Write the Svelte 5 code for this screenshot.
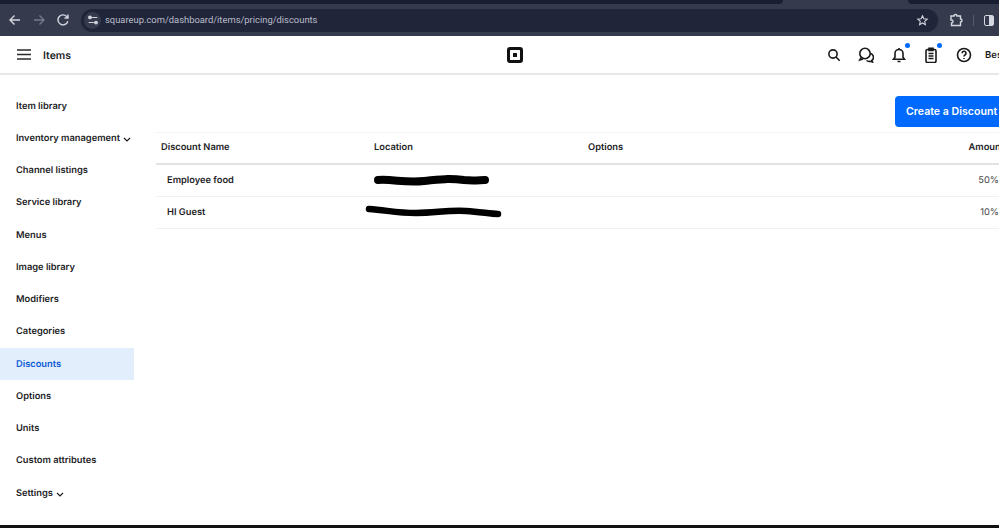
<script lang="ts">
  const navItems = [
    { label: 'Item library' },
    { label: 'Inventory management', caret: true },
    { label: 'Channel listings' },
    { label: 'Service library' },
    { label: 'Menus' },
    { label: 'Image library' },
    { label: 'Modifiers' },
    { label: 'Categories' },
    { label: 'Discounts', active: true },
    { label: 'Options' },
    { label: 'Units' },
    { label: 'Custom attributes' },
    { label: 'Settings', caret: true },
  ];

  const discounts = [
    {
      name: 'Employee food',
      amount: '50%',
      scribbleWidth: 115,
      scribbleShift: 0,
      thickness: 8,
      scribble: 'M4 5 C20 4 30 8 50 6 C70 4 75 3 90 5 C100 6 106 5 111 5',
    },
    {
      name: 'HI Guest',
      amount: '10%',
      scribbleWidth: 135,
      scribbleShift: -8,
      thickness: 6.5,
      scribble: 'M3 2 C20 3 30 6 50 6 C70 6 80 3 100 4 C115 5 125 7 132 7',
    },
  ];
</script>

<div class="window">
  <div class="tabstrip">
    <div class="tab-dark left"></div>
    <div class="tab-dark right"></div>
  </div>

  <div class="toolbar">
    <svg class="tool-icon" viewBox="0 0 16 16"><path d="M13 8H3.500M7.500 3.500 3 8l4.500 4.500" /></svg>
    <svg class="tool-icon dim" viewBox="0 0 16 16"><path d="M3 8h9.500M8.500 3.500 13 8l-4.500 4.500" /></svg>
    <svg class="tool-icon" viewBox="0 0 16 16"><path d="M12.800 9.200A5 5 0 1 1 11.500 4.300L13 5.800M13 2.500v3.500H9.500" /></svg>
    <div class="omnibox">
      <span class="site-chip">
        <svg viewBox="0 0 14 14"><path d="M6 4h6M2 10h6" /><circle cx="3.500" cy="4" r="1.600" /><circle cx="10.500" cy="10" r="1.600" /></svg>
      </span>
      <span class="url">squareup.com/dashboard/items/pricing/discounts</span>
      <svg class="star" viewBox="0 0 16 16"><path d="M8 2.200 9.700 6l4.100.4-3.100 2.700.9 4L8 11l-3.600 2.100.9-4L2.200 6.400 6.300 6z" /></svg>
    </div>
    <svg class="tool-icon puzzle" viewBox="0 0 16 16"><path d="M3 4h3a1.500 1.500 0 0 1 3 0h3.500v3a1.500 1.500 0 0 1 0 3v3.500H3.500V11a1.500 1.500 0 0 0 0-3H3z" /></svg>
    <span class="divider"></span>
    <span class="side-panel"></span>
  </div>

  <header class="topbar">
    <div class="topbar-left">
      <svg class="menu" viewBox="0 0 14 11"><path d="M0 1h14M0 5.500h14M0 10h14" /></svg>
      <span class="title">Items</span>
    </div>

    <svg class="logo" viewBox="0 0 16 16">
      <path fill-rule="evenodd" d="M3 0h10a3 3 0 0 1 3 3v10a3 3 0 0 1-3 3H3a3 3 0 0 1-3-3V3a3 3 0 0 1 3-3zm.500 3a.500.500 0 0 0-.500.500v9a.500.500 0 0 0 .500.500h9a.500.500 0 0 0 .500-.500v-9a.500.500 0 0 0-.500-.500z" />
      <rect x="6" y="6" width="4" height="4" rx=".5" />
    </svg>

    <div class="topbar-right">
      <svg class="top-icon" viewBox="0 0 16 16"><circle cx="7" cy="7" r="4.100" /><path d="m10 10 3.700 3.700" /></svg>
      <svg class="top-icon" viewBox="0 0 16 16"><circle cx="7" cy="6.500" r="5.200" /><path d="M3 10.500 1.800 13l3.200-1M12.800 6.500a4 4 0 0 1 1 7l.7 1.500-2.500-.7a4 4 0 0 1-3.500-.8" /></svg>
      <span class="icon-wrap">
        <svg class="top-icon" viewBox="0 0 16 16"><path d="M2.500 12.200h11l-1.500-2V6.500a4 4 0 0 0-8 0v3.700zM6.500 14.500h3M8 1v1.500" /></svg>
        <span class="badge"></span>
      </span>
      <span class="icon-wrap">
        <svg class="top-icon" viewBox="0 0 16 16"><rect x="3" y="2.500" width="10" height="13" rx="1.500" /><path d="M6 1.200h4v2.300H6zM5.500 6.500h5M5.500 9h5M5.500 11.500h5" /></svg>
        <span class="badge"></span>
      </span>
      <svg class="top-icon" viewBox="0 0 16 16"><circle cx="8" cy="8" r="6.500" /><path d="M6 6.300a2 2 0 1 1 3 1.700c-.7.400-1 .8-1 1.500" /><path d="M8 11v1" /></svg>
      <span class="account">Best</span>
    </div>
  </header>

  <div class="body">
    <nav class="sidebar">
      {#each navItems as item}
        <a class="nav-item" class:active={item.active} href="#top">
          {item.label}
          {#if item.caret}
            <svg class="caret" viewBox="0 0 8 5"><path d="M1 1l3 3 3-3" /></svg>
          {/if}
        </a>
      {/each}
    </nav>

    <main class="content">
      <div class="actions">
        <button class="create">Create a Discount</button>
      </div>

      <div class="table">
        <div class="row head">
          <div>Discount Name</div>
          <div>Location</div>
          <div>Options</div>
          <div class="num">Amount</div>
        </div>
        {#each discounts as d}
          <div class="row">
            <div class="name">{d.name}</div>
            <div class="location">
              <svg
                class="scribble"
                viewBox="0 0 {d.scribbleWidth} 10"
                width={d.scribbleWidth}
                height="10"
                style="margin-left: {d.scribbleShift}px; stroke-width: {d.thickness}"
              >
                <path d={d.scribble} />
              </svg>
            </div>
            <div></div>
            <div class="num amount">{d.amount}</div>
          </div>
        {/each}
      </div>
    </main>
  </div>

  <div class="bottom-edge"></div>
</div>

<style>
  :global(body) {
    margin: 0;
    overflow: hidden;
    background: #fff;
  }

  .window {
    width: 999px;
    height: 528px;
    display: flex;
    flex-direction: column;
    overflow: hidden;
    font-family: Inter, 'Liberation Sans', sans-serif;
    color: #1d1d1f;
    text-rendering: geometricPrecision;
  }

  .tabstrip {
    height: 4px;
    flex: none;
    background: #353a4d;
    display: flex;
    justify-content: space-between;
  }

  .tab-dark {
    background: #1a1e31;
  }

  .tab-dark.left {
    width: 783px;
    border-bottom-right-radius: 4px;
  }

  .tab-dark.right {
    width: 91px;
    border-bottom-left-radius: 4px;
  }

  .toolbar {
    height: 32px;
    flex: none;
    box-sizing: border-box;
    background: #353a4d;
    display: flex;
    align-items: center;
    padding: 0 0 0 7px;
  }

  .tool-icon {
    width: 16px;
    height: 16px;
    flex: none;
    margin-right: 8px;
    fill: none;
    stroke: #d5d7e0;
    stroke-width: 1.4;
  }

  .tool-icon.dim {
    stroke: #767a8b;
  }

  .omnibox {
    width: 857px;
    height: 23px;
    flex: none;
    margin-left: 2px;
    border-radius: 12px;
    background: #20253a;
    display: flex;
    align-items: center;
    padding: 0 9px 0 3px;
    box-sizing: border-box;
  }

  .site-chip {
    width: 17px;
    height: 17px;
    border-radius: 50%;
    background: #353a4d;
    display: flex;
    align-items: center;
    justify-content: center;
    margin-right: 4px;
  }

  .site-chip svg {
    width: 12px;
    height: 12px;
    fill: #d5d7e0;
    stroke: #d5d7e0;
    stroke-width: 1.2;
  }

  .url {
    flex: 1;
    font-family: Roboto, sans-serif;
    font-size: 9.400px;
    color: #b9bcc8;
  }

  .star {
    width: 13px;
    height: 13px;
    fill: none;
    stroke: #d5d7e0;
    stroke-width: 1.3;
  }

  .puzzle {
    margin-left: 10px;
    margin-right: 0;
  }

  .divider {
    width: 1px;
    height: 11px;
    margin: 0 10px 0 9px;
    background: #555a6c;
    flex: none;
  }

  .side-panel {
    width: 8px;
    height: 9px;
    flex: none;
    border: 1.500px solid #d5d7e0;
    border-radius: 2px;
    background: linear-gradient(90deg, transparent 50%, #d5d7e0 50%);
  }

  .topbar {
    width: 1030px;
    height: 39px;
    flex: none;
    box-sizing: border-box;
    background: #fff;
    border-bottom: 2px solid #e8e8e8;
    display: grid;
    grid-template-columns: 1fr auto 1fr;
    align-items: center;
    padding: 0 17px;
  }

  .topbar-left {
    display: flex;
    align-items: center;
    gap: 12px;
  }

  .menu {
    width: 14px;
    height: 11px;
    fill: none;
    stroke: #2b2b2b;
    stroke-width: 1.500;
  }

  .title {
    font-size: 10.500px;
    font-weight: 600;
    padding-top: 1px;
  }

  .logo {
    width: 16px;
    height: 16px;
    fill: #111;
  }

  .topbar-right {
    display: flex;
    align-items: center;
    justify-content: flex-end;
    gap: 16.500px;
    white-space: nowrap;
  }

  .top-icon {
    display: block;
    width: 16px;
    height: 16px;
    fill: none;
    stroke: #1a1a1a;
    stroke-width: 1.600;
  }

  .icon-wrap {
    position: relative;
    display: block;
  }

  .badge {
    position: absolute;
    top: -4px;
    right: -3px;
    width: 5px;
    height: 5px;
    border-radius: 50%;
    background: #006aff;
  }

  .account {
    font-size: 9.500px;
    font-weight: 600;
    margin-left: -3px;
    padding-top: 1px;
    width: 28px;
  }

  .body {
    flex: 1;
    display: flex;
    min-height: 0;
  }

  .sidebar {
    width: 134px;
    flex: none;
    padding-top: 14.500px;
  }

  .nav-item {
    display: flex;
    align-items: center;
    gap: 3px;
    height: 32.250px;
    box-sizing: border-box;
    padding: 1px 0 0 16px;
    font-size: 9.300px;
    font-weight: 600;
    color: #1d1d1f;
    text-decoration: none;
    white-space: nowrap;
  }

  .nav-item.active {
    background: #e3eefc;
    color: #0a5ad4;
  }

  .caret {
    width: 8px;
    height: 5px;
    margin-top: 2px;
    fill: none;
    stroke: #1d1d1f;
    stroke-width: 1.200;
  }

  .content {
    flex: 1;
    min-width: 0;
    padding: 21px 0 0 22px;
  }

  .actions {
    display: flex;
    height: 32px;
    margin-bottom: 4px;
    padding-left: 739px;
  }

  .create {
    width: 130px;
    flex: none;
    height: 31px;
    border: none;
    border-radius: 4px;
    background: #006aff;
    color: #fff;
    font-family: inherit;
    font-size: 10.600px;
    font-weight: 600;
    text-align: left;
    padding: 0 0 0 11px;
  }

  .table {
    width: 848px;
    border-top: 1px solid #f4f4f4;
  }

  .row {
    display: grid;
    grid-template-columns: 213px 214px 1fr 60px;
    align-items: center;
    height: 32px;
    box-sizing: border-box;
    padding: 0 0 1px 5px;
    border-bottom: 1px solid #f0f0f0;
    font-size: 9.300px;
  }

  .row.head {
    border-bottom: 2px solid #e2e2e2;
    font-weight: 600;
  }

  .name {
    padding-left: 6px;
    font-weight: 600;
  }

  .location {
    line-height: 0;
  }

  .scribble {
    overflow: visible;
    fill: none;
    stroke: #000;
    stroke-linecap: round;
  }

  .num {
    text-align: right;
  }

  .amount {
    color: #444;
    padding-right: 5px;
  }

  .bottom-edge {
    height: 3px;
    flex: none;
    background: #111;
  }
</style>
